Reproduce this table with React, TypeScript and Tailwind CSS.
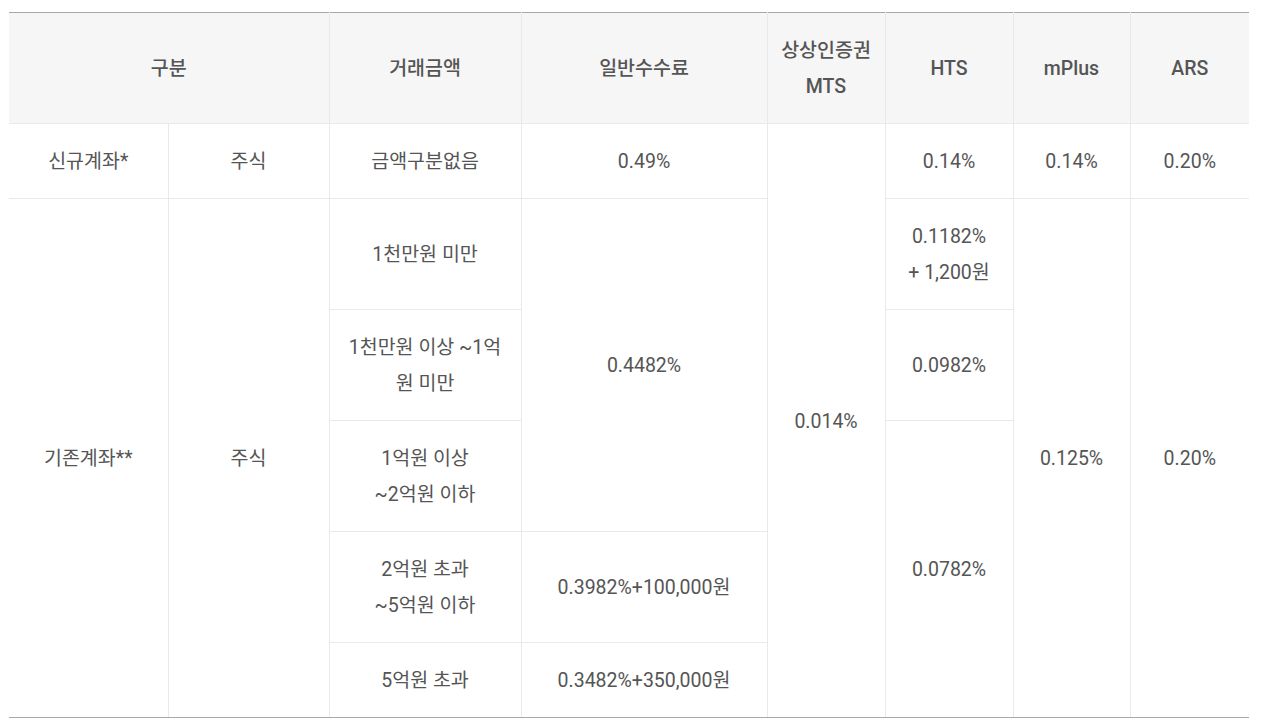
import React from "react";

const cell = "border border-[#e9e9e9] px-3 pt-[20px] pb-[18px] text-center align-middle";
const head = "border border-[#e9e9e9] border-t-[#a8a8a8] px-3 pt-[20px] pb-[18px] text-center align-middle font-medium";
const last = "border-b-[#a8a8a8]";

export default function App() {
  return (
    <div
      className="min-h-screen bg-white pt-3 pl-[9px] pr-[13px] text-[19.5px] leading-[36px] text-[#555]"
      style={{ fontFamily: "Roboto, 'Noto Sans CJK KR', sans-serif" }}
    >
      <table className="w-[1240px] table-fixed border-collapse [&_td:first-child]:border-l-0 [&_th:first-child]:border-l-0 [&_td:last-child]:border-r-0 [&_th:last-child]:border-r-0">
        <colgroup>
          <col className="w-[159px]" />
          <col className="w-[161px]" />
          <col className="w-[192px]" />
          <col className="w-[246px]" />
          <col className="w-[118px]" />
          <col className="w-[128px]" />
          <col className="w-[117px]" />
          <col className="w-[119px]" />
        </colgroup>
        <thead className="bg-[#f6f6f6]">
          <tr>
            <th colSpan={2} className={head}>구분</th>
            <th className={head}>거래금액</th>
            <th className={head}>일반수수료</th>
            <th className={head}>
              상상인증권
              <br />
              MTS
            </th>
            <th className={head}>HTS</th>
            <th className={head}>mPlus</th>
            <th className={head}>ARS</th>
          </tr>
        </thead>
        <tbody>
          <tr>
            <td className={cell}>신규계좌*</td>
            <td className={cell}>주식</td>
            <td className={cell}>금액구분없음</td>
            <td className={cell}>0.49%</td>
            <td rowSpan={6} className={`${cell} ${last} !border-r-[#e9e9e9]`}>0.014%</td>
            <td className={cell}>0.14%</td>
            <td className={cell}>0.14%</td>
            <td className={cell}>0.20%</td>
          </tr>
          <tr>
            <td rowSpan={5} className={`${cell} ${last}`}>기존계좌**</td>
            <td rowSpan={5} className={`${cell} ${last}`}>주식</td>
            <td className={cell}>1천만원 미만</td>
            <td rowSpan={3} className={cell}>0.4482%</td>
            <td className={cell}>
              0.1182%
              <br />+ 1,200원
            </td>
            <td rowSpan={5} className={`${cell} ${last}`}>0.125%</td>
            <td rowSpan={5} className={`${cell} ${last}`}>0.20%</td>
          </tr>
          <tr>
            <td className={cell}>
              1천만원 이상 ~1억
              <br />원 미만
            </td>
            <td className={cell}>0.0982%</td>
          </tr>
          <tr>
            <td className={cell}>
              1억원 이상
              <br />
              ~2억원 이하
            </td>
            <td rowSpan={3} className={`${cell} ${last}`}>0.0782%</td>
          </tr>
          <tr>
            <td className={cell}>
              2억원 초과
              <br />
              ~5억원 이하
            </td>
            <td className={cell}>0.3982%+100,000원</td>
          </tr>
          <tr>
            <td className={`${cell} ${last}`}>5억원 초과</td>
            <td className={`${cell} ${last}`}>0.3482%+350,000원</td>
          </tr>
        </tbody>
      </table>
    </div>
  );
}
